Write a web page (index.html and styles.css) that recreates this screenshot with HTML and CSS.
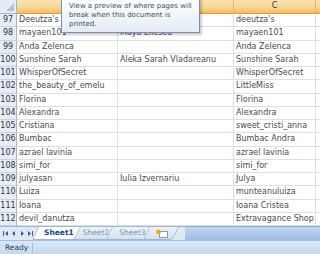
FILE: index.html
```html
<!DOCTYPE html>
<html lang="en">
<head>
<meta charset="UTF-8">
<title>Book1 - Sheet1</title>
<link rel="stylesheet" href="styles.css">
</head>
<body>
<div class="sheet">
  <div class="grid">
    <div class="corner"><span class="tri"></span></div>
    <div class="colhead">A</div>
    <div class="colhead">B</div>
    <div class="colhead">C</div>
    <div class="colhead last"></div>

    <div class="rowhead">97</div><div class="cell">Deeutza's</div><div class="cell"></div><div class="cell">deeutza's</div><div class="cell"></div>
    <div class="rowhead">98</div><div class="cell">mayaen101</div><div class="cell">Maya Eliescu</div><div class="cell">mayaen101</div><div class="cell"></div>
    <div class="rowhead">99</div><div class="cell">Anda Zelenca</div><div class="cell"></div><div class="cell">Anda Zelenca</div><div class="cell"></div>
    <div class="rowhead">100</div><div class="cell">Sunshine Sarah</div><div class="cell">Aleka Sarah Vladareanu</div><div class="cell">Sunshine Sarah</div><div class="cell"></div>
    <div class="rowhead">101</div><div class="cell">WhisperOfSecret</div><div class="cell"></div><div class="cell">WhisperOfSecret</div><div class="cell"></div>
    <div class="rowhead">102</div><div class="cell">the_beauty_of_emelu</div><div class="cell"></div><div class="cell">LittleMiss</div><div class="cell"></div>
    <div class="rowhead">103</div><div class="cell">Florina</div><div class="cell"></div><div class="cell">Florina</div><div class="cell"></div>
    <div class="rowhead">104</div><div class="cell">Alexandra</div><div class="cell"></div><div class="cell">Alexandra</div><div class="cell"></div>
    <div class="rowhead">105</div><div class="cell">Cristiana</div><div class="cell"></div><div class="cell">sweet_cristi_anna</div><div class="cell"></div>
    <div class="rowhead">106</div><div class="cell">Bumbac</div><div class="cell"></div><div class="cell">Bumbac Andra</div><div class="cell"></div>
    <div class="rowhead">107</div><div class="cell">azrael lavinia</div><div class="cell"></div><div class="cell">azrael lavinia</div><div class="cell"></div>
    <div class="rowhead">108</div><div class="cell">simi_for</div><div class="cell"></div><div class="cell">simi_for</div><div class="cell"></div>
    <div class="rowhead">109</div><div class="cell">julyasan</div><div class="cell">Iulia Izvernariu</div><div class="cell">Julya</div><div class="cell"></div>
    <div class="rowhead">110</div><div class="cell">Luiza</div><div class="cell"></div><div class="cell">munteanuluiza</div><div class="cell"></div>
    <div class="rowhead">111</div><div class="cell">Ioana</div><div class="cell"></div><div class="cell">Ioana Cristea</div><div class="cell"></div>
    <div class="rowhead">112</div><div class="cell">devil_danutza</div><div class="cell"></div><div class="cell">Extravagance Shop</div><div class="cell"></div>
  </div>

  <div class="tabbar">
    <div class="nav">
      <svg width="32" height="7" viewBox="0 0 32 7">
        <g fill="#3d5a86">
          <rect x="0" y="1" width="1" height="5"/>
          <polygon points="5,1 5,6 2,3.5"/>
          <polygon points="12,1 12,6 9,3.5"/>
          <polygon points="18,1 18,6 21,3.5"/>
          <polygon points="25,1 25,6 28,3.5"/>
          <rect x="29" y="1" width="1" height="5"/>
        </g>
      </svg>
    </div>
    <div class="tab active">Sheet1</div>
    <div class="tab">Sheet2</div>
    <div class="tab">Sheet3</div>
    <div class="tab newtab">
      <svg width="14" height="9" viewBox="0 0 14 9">
        <rect x="4.5" y="2.5" width="8" height="6" fill="#fff" stroke="#7f9db9"/>
        <circle cx="3.5" cy="3" r="2.4" fill="#f5a623"/>
      </svg>
    </div>
    <div class="tabfill"></div>
  </div>

  <div class="status">
    <span class="ready">Ready</span>
  </div>

  <div class="tip">View a preview of where pages will break when this document is printed.</div>
</div>
</body>
</html>
```

FILE: styles.css
```css
body {
    margin: 0;
    font-family: "DejaVu Sans", sans-serif;
}
.sheet {
    position: relative;
    width: 320px;
    height: 254px;
    overflow: hidden;
    background: #fff;
}
.grid {
    display: grid;
    grid-template-columns: 17px 101px 116px 82px 20px;
    grid-template-rows: 14px repeat(16, 13.25px);
    font-size: 8px;
    color: #4a4a4a;
}
.grid > div {
    box-sizing: border-box;
    border-right: 1px solid #dadfe8;
    border-bottom: 1px solid #dadfe8;
    white-space: nowrap;
    overflow: hidden;
    line-height: 12px;
}
.corner {
    position: relative;
    background: #e4ecf7;
    border-right-color: #9eb6ce !important;
    border-bottom: 1px solid #9eb6ce !important;
}
.tri {
    position: absolute;
    right: 2px;
    bottom: 2px;
    width: 0;
    height: 0;
    border-left: 8px solid transparent;
    border-bottom: 8px solid #b4c3d6;
}
.colhead {
    background: linear-gradient(#fbe3b4, #f9d89a 50%, #f1c15f);
    border-right-color: #f2b46a !important;
    border-bottom: 1px solid #f29536 !important;
    text-align: center;
    color: #333;
    font-size: 8px;
}
.colhead.last {
    border-right-color: #e2d3b9 !important;
}
.rowhead {
    background: #e6edf7;
    border-right-color: #9eb6ce !important;
    border-bottom-color: #c5d3e6 !important;
    text-align: center;
    color: #333;
    font-size: 8px;
}
.cell {
    padding-left: 2px;
}
.tabbar {
    display: flex;
    height: 14px;
    background: #dfe8f4;
    border-top: 1px solid #9eb6ce;
    box-sizing: border-box;
    font-size: 7.5px;
}
.nav {
    display: flex;
    align-items: center;
    width: 38px;
    padding-left: 3px;
    box-sizing: border-box;
}
.tab {
    position: relative;
    isolation: isolate;
    margin-left: -5px;
    padding: 0 8px 0 7px;
    line-height: 12px;
    color: #7d90ad;
}
.tab::before {
    content: "";
    position: absolute;
    z-index: -1;
    inset: 0;
    background: linear-gradient(#eef3fa, #d5e1f0);
    border: 1px solid #9eb6ce;
    border-top: none;
    border-radius: 0 0 4px 2px;
    transform: skewX(-25deg);
    transform-origin: top;
}
.tab.active {
    z-index: 1;
    margin-left: 0;
    color: #15428b;
    font-weight: bold;
    font-size: 7.5px;
    padding: 0 7px 0 6px;
}
.tab.active::before {
    background: #fff;
}
.tab.newtab {
    padding: 0 10px 0 6px;
    display: flex;
    align-items: center;
}
.tabfill {
    flex: 1;
    margin-left: 6px;
    margin-top: -1px;
    background: linear-gradient(#c3d6ee, #9fbce3);
    border-top: 1px solid #8eaad1;
}
.status {
    display: flex;
    align-items: center;
    height: 14px;
    background: linear-gradient(#dde8f6, #c6d8ef);
    border-top: 1px solid #a6bedf;
    box-sizing: border-box;
    font-size: 7.5px;
    color: #2e3e56;
}
.ready {
    padding: 0 4px 0 5px;
    border-right: 1px solid #a5bcd9;
    line-height: 10px;
}
.tip {
    position: absolute;
    left: 61px;
    top: -5px;
    width: 125px;
    padding: 6px 5px 3px 7px;
    font-size: 7px;
    line-height: 9px;
    color: #4c4c4c;
    background: linear-gradient(#fff, #e4ecf7);
    border: 1px solid #7b8fae;
    box-shadow: 2px 2px 2px rgba(0, 0, 0, 0.2);
}
```
